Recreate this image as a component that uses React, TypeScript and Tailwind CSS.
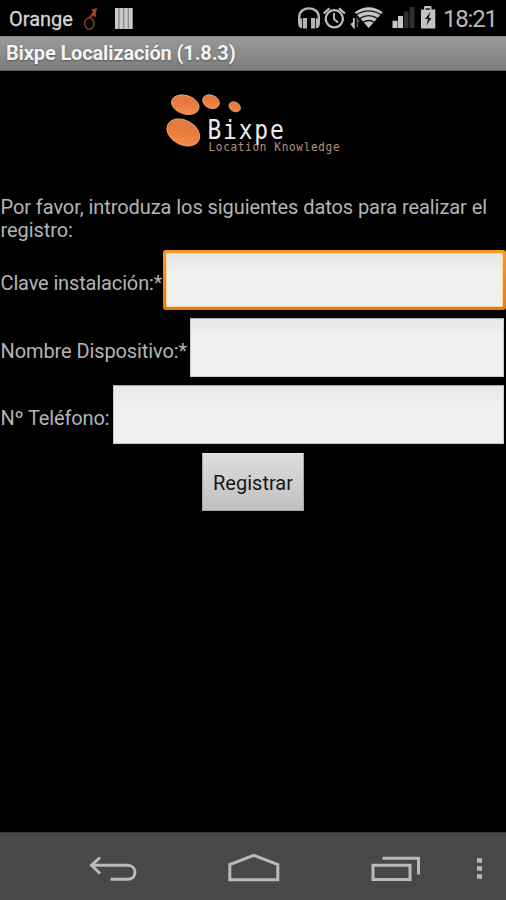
import type { ReactNode } from "react";

function StatusBar() {
  return (
    <header className="flex h-[36px] shrink-0 items-center bg-black pl-[9px] text-[#d4d4d4]">
      <span className="w-[66px] whitespace-nowrap pt-[2px] text-[20px] leading-[36px] [-webkit-text-stroke:0.3px]">
        Orange
      </span>
      <svg width="28" height="36" viewBox="0 0 28 36" className="ml-[5px] shrink-0" fill="none" aria-hidden>
        <ellipse cx="9.3" cy="23.5" rx="4.6" ry="5.8" stroke="#85401f" strokeWidth="1.5" />
        <path d="M9 18L12.5 14.5M12 15L16 16" stroke="#93401a" strokeWidth="2" />
        <path d="M11 9.5L17 8L15.5 15.5L11.5 14.5L13 11Z" fill="#a5481d" />
      </svg>
      <svg width="20" height="36" viewBox="0 0 20 36" className="ml-[6px] shrink-0" aria-hidden>
        <path d="M1 8H18.5V29H1Z" fill="#8b8d8b" />
        <path d="M1 8H4.2V29H1ZM5.7 8H8.9V29H5.7ZM10.4 8H13.6V29H10.4ZM15.1 8H18.5V29H15.1Z" fill="#c9cbc9" />
      </svg>
      <svg width="146" height="36" viewBox="292 0 146 36" className="ml-auto shrink-0" fill="none" aria-hidden>
        {/* headphones */}
        <path d="M299.2 22V17C299.2 5.5 318.8 5.5 318.8 17V22" stroke="#b4b4b4" strokeWidth="2.4" />
        <path d="M298 18.5H302V28H300Q298 26 298 23ZM302.8 18H307V28.5H302.8ZM311 18H315.2V28.5H311ZM316 18.5H320V23Q320 26 318 28H316Z" fill="#b4b4b4" />
        {/* alarm clock */}
        <circle cx="334.3" cy="18.8" r="8.6" stroke="#bcbcbc" strokeWidth="2.3" />
        <path d="M334 13V19L338 22.5" stroke="#bcbcbc" strokeWidth="1.9" />
        <path d="M323.7 13.5L329.5 8.3M339 8.3L345 13.5" stroke="#bcbcbc" strokeWidth="2.2" />
        {/* wifi and traffic arrows */}
        <path d="M350.5 24L353 22V18H354.8V28.5H353.5Z" fill="#bcbcbc" />
        <path d="M357.3 27V19L359.2 22" stroke="#4d4d4d" strokeWidth="1.7" />
        <path d="M354.7 12.2Q368.7 2.5 382.7 12.2L368.7 28Z" fill="#c6c6c6" />
        <path d="M356.5 14.7Q368.7 7 381 14.7M359.5 18.7Q368.7 12.5 378 18.7M362.8 22.6Q368.7 18.5 374.6 22.6" stroke="#151515" strokeWidth="1.4" />
        {/* signal */}
        <path d="M392.5 20.8H397.5V28H392.5ZM398 16H403V28H398Z" fill="#c8c8c8" />
        <path d="M404 11.5H408.5V28H404ZM409.5 7H414.5V28H409.5Z" fill="#303030" />
        {/* battery */}
        <path d="M421 9.5H424V7.3Q424 6 425.3 6H430.2Q431.5 6 431.5 7.3V9.5H435.3V28.5H421Z" fill="#c3c3c3" />
        <path d="M425.5 8H430V10H425.5Z" fill="#444" />
        <path d="M430.5 12L425 19H428L426.3 25.5L431.5 18H428.8Z" fill="#181818" />
      </svg>
      <span className="ml-[5px] w-[63px] shrink-0 whitespace-nowrap pt-[2px] text-[24px] leading-[36px] tracking-[-1.2px] text-[#b9b9b9]">
        18:21
      </span>
    </header>
  );
}

function Logo() {
  return (
    <svg width="180" height="70" viewBox="163 90 180 70" aria-label="Bixpe Location Knowledge">
      <defs>
        <linearGradient id="toe" x1="0" y1="0" x2="0.4" y2="1">
          <stop offset="0" stopColor="#de7b43" />
          <stop offset="0.5" stopColor="#e67a3b" />
          <stop offset="1" stopColor="#ef8a4b" />
        </linearGradient>
      </defs>
      <g fill="url(#toe)" stroke="#f5a576" strokeWidth="0.8">
        <ellipse cx="185.3" cy="104.7" rx="14.2" ry="9.3" transform="rotate(17 185.3 104.7)" />
        <ellipse cx="211" cy="101.7" rx="8.7" ry="6.5" transform="rotate(24 211 101.7)" />
        <ellipse cx="234.7" cy="106.8" rx="6" ry="4.6" transform="rotate(30 234.7 106.8)" />
        <ellipse cx="183.3" cy="132.5" rx="17.5" ry="12.3" transform="rotate(28 183.3 132.5)" />
      </g>
      <g className="font-['DejaVu_Sans_Mono',monospace]">
        <text transform="translate(207.5 138.5) scale(0.88 1)" fontSize="26" letterSpacing="2.1" fill="#ececec">
          Bixpe
        </text>
        <text transform="translate(208.5 151.3) scale(0.92 1)" fontSize="12" letterSpacing="0.74" fill="#b8917e">
          Location Knowledge
        </text>
      </g>
    </svg>
  );
}

interface FieldRowProps {
  label: ReactNode;
  labelClass: string;
  focused?: boolean;
}

function FieldRow({ label, labelClass, focused = false }: FieldRowProps) {
  return (
    <div className={`flex items-center ${focused ? "h-[60px]" : "h-[59px] pr-[2px]"}`}>
      <label className={`shrink-0 whitespace-nowrap pl-[0.5px] pt-[6px] text-[20px] leading-[24px] ${labelClass}`}>
        {label}
      </label>
      {focused ? (
        <div className="h-full min-w-0 flex-1 rounded-[3px] bg-linear-to-b from-[#f79a22] to-[#e57c0b] p-[3px]">
          <input
            type="text"
            className="block h-full w-full rounded-[1px] border border-[#fbd9a8] bg-linear-to-b from-[#e6e6e6] to-[#f0f0f0] to-35% px-2 text-black outline-none"
          />
        </div>
      ) : (
        <input
          type="text"
          className="block h-full min-w-0 flex-1 border border-[#c9c9c9] border-t-[#a9a9a9] bg-linear-to-b from-[#e8e8e8] to-[#f0f0f0] to-35% px-2 text-black outline-none"
        />
      )}
    </div>
  );
}

function NavBar() {
  return (
    <nav className="h-[68px] shrink-0 border-t border-[#343434] bg-[#484849]">
      <svg width="506" height="67" viewBox="0 833 506 67" fill="none" stroke="#bababa" strokeWidth="3" aria-hidden>
        <path d="M100 857.5L91.5 865.3L100 873.5M92 865.3H127.5C137.5 865.3 137.5 879.3 127.5 879.3H110.5" />
        <path d="M229.8 879.7V864.5L253.7 855.3L277.8 864.5V879.7Z" />
        <path d="M373 865.2H410V879.5H373Z" />
        <path d="M382.5 858.3H418.5V874.5" />
        <path d="M477 858.2H482V862.8H477ZM477 866.2H482V870.8H477ZM477 874.2H482V878.8H477Z" fill="#bababa" stroke="none" />
      </svg>
    </nav>
  );
}

export default function App() {
  return (
    <div className="flex h-[900px] w-[506px] flex-col overflow-hidden bg-black font-[Roboto,sans-serif] text-[#b4b4b4]">
      <StatusBar />
      <h1 className="h-[35px] shrink-0 whitespace-nowrap border-y border-t-[#858585] border-b-[#5c5c5c] bg-linear-to-b from-[#9a9a9a] to-[#7d7d7d] pl-[6px] text-[20px] font-bold leading-[32px] tracking-[-0.14px] text-[#f4f4f4] [text-shadow:0_1px_2px_#555]">
        Bixpe Localización (1.8.3)
      </h1>
      <main className="flex min-h-0 flex-1 flex-col">
        <div className="flex h-[124px] shrink-0 justify-center pt-[19px]">
          <Logo />
        </div>
        <p className="h-[55px] shrink-0 whitespace-nowrap pl-[0.5px] pt-px text-[20px] leading-[23px] tracking-[-0.07px]">
          Por favor, introduza los siguientes datos para realizar el
          <br />
          registro:
        </p>
        <form className="flex flex-col gap-[8px]">
          <FieldRow label="Clave instalación:*" labelClass="w-[163px] tracking-[-0.14px]" focused />
          <FieldRow label="Nombre Dispositivo:*" labelClass="w-[190px] tracking-[-0.1px]" />
          <FieldRow label="Nº Teléfono:" labelClass="w-[113px] tracking-[-0.15px]" />
          <button
            type="button"
            className="ml-[202px] mt-px h-[58px] w-[102px] border border-[#a5a5a5] border-t-[#e6e6e6] bg-linear-to-b from-[#dddddd] to-[#c0c0c0] pt-px text-[20px] text-[#171717]"
          >
            Registrar
          </button>
        </form>
      </main>
      <NavBar />
    </div>
  );
}
